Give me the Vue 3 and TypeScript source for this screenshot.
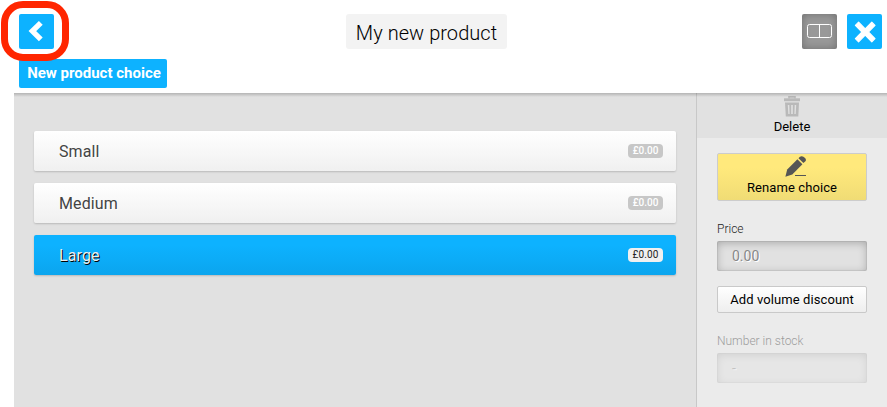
<script setup lang="ts">
import { ref } from 'vue'

interface Choice {
  name: string
  price: string
}

const choices: Choice[] = [
  { name: 'Small', price: '£0.00' },
  { name: 'Medium', price: '£0.00' },
  { name: 'Large', price: '£0.00' },
]
const selected = ref('Large')
</script>

<template>
  <div class="app">
    <header class="header">
      <div class="bar">
        <div class="bar-side">
          <button class="square back" aria-label="Back">
            <svg width="35" height="35" viewBox="0 0 35 35">
              <path d="M21.8 8.8 L13.4 17.1 L21.8 25.4" fill="none" stroke="#fff" stroke-width="5.4" />
            </svg>
            <span class="ring"></span>
          </button>
        </div>
        <h1 class="title">My new product</h1>
        <div class="bar-side end">
          <button class="square split" aria-label="Layout">
            <svg width="35" height="35" viewBox="0 0 35 35">
              <path d="M7.5 10.5 H27.5 Q29.5 10.5 29.5 12.5 V21.5 Q29.5 23.5 27.5 23.5 H7.5 Q5.5 23.5 5.5 21.5 V12.5 Q5.5 10.5 7.5 10.5 Z M17.5 10.5 V23.5" fill="none" stroke="#fff" stroke-width="1" />
            </svg>
          </button>
          <button class="square" aria-label="Close">
            <svg width="35" height="35" viewBox="0 0 35 35">
              <path
                d="M11.6 8.2 L18.2 14.8 L24.8 8.2 L28 11.4 L21.4 18 L28 24.6 L24.8 27.8 L18.2 21.2 L11.6 27.8 L8.4 24.6 L15 18 L8.4 11.4 Z"
                fill="#fff"
                stroke="#fff"
                stroke-width="1.2"
                stroke-linejoin="round"
              />
            </svg>
          </button>
        </div>
      </div>
      <button class="new-choice">New product choice</button>
    </header>

    <div class="body">
      <main class="list">
        <div
          v-for="choice in choices"
          :key="choice.name"
          class="row"
          :class="{ active: choice.name === selected }"
          @click="selected = choice.name"
        >
          <span class="name">{{ choice.name }}</span>
          <span class="badge">{{ choice.price }}</span>
        </div>
      </main>

      <aside class="side">
        <button class="delete">
          <svg width="16" height="21" viewBox="0 0 16 21">
            <path d="M5 2.5 V.9 H11 V2.5" fill="none" stroke="#b9b9b9" stroke-width="1.6" />
            <path d="M0 2.3 H16 V5.2 H0 Z" fill="#b9b9b9" />
            <path fill-rule="evenodd" d="M1 6.4 H15 L14.3 20.6 H1.8 Z M3.8 9 L4.3 18 H5.6 L5.3 9 Z M7.2 9 V18 H8.8 V9 Z M10.7 9 L10.4 18 H11.7 L12.2 9 Z" fill="#b9b9b9" />
          </svg>
          <span>Delete</span>
        </button>

        <div class="fields">
          <button class="rename">
            <svg class="pencil" width="22" height="21" viewBox="0 0 22 21">
              <path d="M.4 20.7 L2.2 13.4 L12.4 3.2 L17.4 8.2 L7.3 18.5 Z" fill="#555" />
              <path d="M13.5 2.2 L14.6 1.1 Q16.4 -.2 18.4 .8 Q21.8 2.6 20.7 5 L18.4 7.1 Z" fill="#555" />
              <path d="M10 19.5 H21" stroke="#555" stroke-width="1" />
            </svg>
            <span>Rename choice</span>
          </button>

          <label class="label">Price</label>
          <div class="field">0.00</div>

          <button class="discount">Add volume discount</button>

          <div class="disabled">
            <label class="label">Number in stock</label>
            <div class="field">-</div>
          </div>
        </div>
      </aside>
    </div>
  </div>
</template>

<style>
body {
  margin: 0;
  overflow: hidden;
  background: #fff;
}
</style>

<style scoped>
.app {
  display: flex;
  flex-direction: column;
  box-sizing: border-box;
  height: 407px;
  padding-left: 14px;
  font-family: Roboto, 'Liberation Sans', sans-serif;
  color: #000;
}
button {
  padding: 0;
  border: 0;
  font: inherit;
  color: inherit;
}
svg {
  display: block;
}
.header {
  box-sizing: border-box;
  height: 93px;
  padding: 14px 5px 0;
  background: #fff;
}
.bar {
  display: flex;
  height: 35px;
}
.bar-side {
  display: flex;
  width: 327px;
  gap: 10px;
}
.end {
  flex: 1;
  justify-content: flex-end;
}
.square {
  width: 35px;
  height: 35px;
  border-radius: 2px;
  background: #0db2ff;
}
.split {
  background: #999;
  box-shadow: inset 0 0 8px rgba(0, 0, 0, 0.28);
}
.back {
  position: relative;
}
.ring {
  position: absolute;
  z-index: 2;
  left: -18px;
  top: -13px;
  box-sizing: border-box;
  width: 68px;
  height: 60px;
  border: 7px solid #ff2600;
  border-radius: 22px;
}
.title {
  box-sizing: border-box;
  width: 161px;
  height: 35px;
  margin: 0;
  border-radius: 3px;
  background: #f3f3f3;
  font-size: 20px;
  font-weight: 300;
  letter-spacing: 0.05px;
  line-height: 38px;
  text-align: center;
  white-space: nowrap;
}
.new-choice {
  display: block;
  width: 148px;
  height: 29px;
  margin-top: 10px;
  padding: 0 0 1px 2px;
  border-radius: 2px;
  background: #0db2ff;
  color: #fff;
  font-size: 15px;
  font-weight: 700;
  line-height: 28px;
  white-space: nowrap;
}
.body {
  display: flex;
  flex: 1;
  background: #e1e1e1;
}
.body::before {
  content: '';
  align-self: flex-start;
  width: 873px;
  height: 4px;
  margin-right: -873px;
  background: linear-gradient(rgba(0, 0, 0, 0.2), rgba(0, 0, 0, 0));
  z-index: 1;
}
.list {
  display: flex;
  flex: 1;
  flex-direction: column;
  gap: 12px;
  padding: 38px 20px 0;
}
.row {
  display: flex;
  align-items: center;
  justify-content: space-between;
  box-sizing: border-box;
  height: 40px;
  padding: 0 13px 0 25px;
  border-radius: 2px;
  background: linear-gradient(#fff, #f0f0f0);
  box-shadow: 0 1px 2px rgba(0, 0, 0, 0.18);
  color: #444;
  font-size: 16px;
}
.name {
  letter-spacing: 0.1px;
  text-shadow: 1px 1px 0 #fff;
}
.badge {
  width: 35px;
  height: 14px;
  border-radius: 4px;
  background: #c7c7c7;
  color: #fff;
  font-size: 10px;
  font-weight: 500;
  line-height: 14px;
  text-align: center;
}
.active {
  background: linear-gradient(#0db2ff 25%, #0ba5ee);
  color: #eee;
}
.active .name {
  text-shadow: 1px 1px 0 #000;
}
.active .badge {
  background: #f0f0f0;
  color: #222;
  font-weight: 400;
  letter-spacing: 0.15px;
}
.side {
  box-sizing: border-box;
  width: 191px;
  border-left: 1px solid #c8c8c8;
  background: #ebebeb;
}
.delete {
  display: flex;
  flex-direction: column;
  align-items: center;
  width: 100%;
  height: 45px;
  padding-top: 3px;
  background: #e1e1e1;
  font-size: 13px;
  line-height: 20px;
}
.fields {
  display: flex;
  flex-direction: column;
  padding: 15px 20px 0;
}
.rename {
  display: flex;
  flex-direction: column;
  align-items: center;
  box-sizing: border-box;
  height: 48px;
  padding-top: 2px;
  border: 1px solid #ccc;
  border-radius: 2px;
  background: linear-gradient(#ffe97c 30%, #f0dc75);
  font-size: 13px;
  letter-spacing: 0.1px;
  line-height: 21px;
}
.pencil {
  margin-left: 8px;
}
.label {
  display: block;
  height: 24px;
  margin-top: 16px;
  color: #222;
  font-size: 12px;
  font-weight: 300;
  line-height: 25px;
}
.field {
  box-sizing: border-box;
  height: 30px;
  padding-left: 15px;
  border-radius: 2px;
  background: #e1e1e1;
  box-shadow: inset 0 0 0 1px rgba(0, 0, 0, 0.06), inset 0 2px 8px rgba(0, 0, 0, 0.25);
  color: #888;
  font-size: 14px;
  line-height: 30px;
  text-shadow: 1px 1px 0 #fff;
}
.discount {
  box-sizing: border-box;
  height: 27px;
  margin-top: 15px;
  border: 1px solid #c9c9c9;
  border-radius: 2px;
  background: linear-gradient(#fff, #eee);
  font-size: 13px;
  letter-spacing: 0.1px;
  line-height: 25px;
  white-space: nowrap;
}
.disabled {
  opacity: 0.4;
}
</style>
